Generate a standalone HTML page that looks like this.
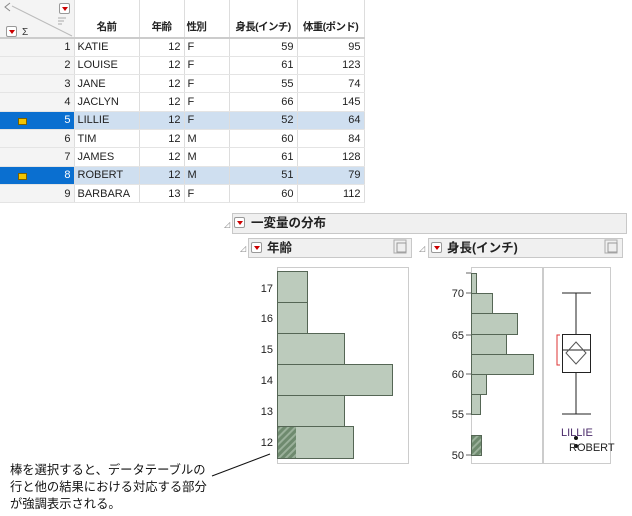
<!DOCTYPE html>
<html><head><meta charset="utf-8"><style>
*{margin:0;padding:0;box-sizing:border-box}
body{width:632px;height:516px;background:#fff;position:relative;overflow:hidden;font-family:"Liberation Sans","Noto Sans CJK JP",sans-serif;font-size:11px;color:#222}
.a{position:absolute}
table{position:absolute;left:0;top:0;border-collapse:collapse;table-layout:fixed;width:364px}
td{height:18.3px;border-right:1px solid #ddd;border-bottom:1px solid #e4e4e4;padding:0 3px;white-space:nowrap;overflow:hidden}
.rh{background:#f4f4f4;text-align:right}
.r{text-align:right}
.sel td{background:#cfdff0}
.sel td.rh{background:#0a6fd0;color:#fff}
th{height:38px;font-weight:bold;vertical-align:bottom;padding:0 2px 3px;border-right:1px solid #ddd;border-bottom:2px solid #ccc;font-size:10.5px;white-space:nowrap;letter-spacing:-0.6px;overflow:visible}
.hdr{background:#f0f0f0;border:1px solid #c8c8c8;font-weight:bold;font-size:12.5px;padding-left:18px;line-height:19px}
.tri{position:absolute;width:11px;height:11px;border:1px solid #999;background:#fff;border-radius:2px}
.tri:after{content:"";position:absolute;left:2px;top:3px;border-left:3px solid transparent;border-right:3px solid transparent;border-top:4px solid #c00}
</style></head><body>
<table>
<colgroup><col style="width:74px"><col style="width:65px"><col style="width:45px"><col style="width:45px"><col style="width:68px"><col style="width:67px"></colgroup>
<tr><th class="rh" style="background:#f4f4f4"></th><th>名前</th><th>年齢</th><th style="text-align:left">性別</th><th>身長(インチ)</th><th>体重(ポンド)</th></tr>
<tr><td class="rh">1</td><td>KATIE</td><td class="r">12</td><td>F</td><td class="r">59</td><td class="r">95</td></tr>
<tr><td class="rh">2</td><td>LOUISE</td><td class="r">12</td><td>F</td><td class="r">61</td><td class="r">123</td></tr>
<tr><td class="rh">3</td><td>JANE</td><td class="r">12</td><td>F</td><td class="r">55</td><td class="r">74</td></tr>
<tr><td class="rh">4</td><td>JACLYN</td><td class="r">12</td><td>F</td><td class="r">66</td><td class="r">145</td></tr>
<tr class="sel"><td class="rh"><span style="float:left;margin-left:15px;margin-top:4px;width:9px;height:7px;background:#f3c400;border:1px solid #7a6000"></span>5</td><td>LILLIE</td><td class="r">12</td><td>F</td><td class="r">52</td><td class="r">64</td></tr>
<tr><td class="rh">6</td><td>TIM</td><td class="r">12</td><td>M</td><td class="r">60</td><td class="r">84</td></tr>
<tr><td class="rh">7</td><td>JAMES</td><td class="r">12</td><td>M</td><td class="r">61</td><td class="r">128</td></tr>
<tr class="sel"><td class="rh"><span style="float:left;margin-left:15px;margin-top:4px;width:9px;height:7px;background:#f3c400;border:1px solid #7a6000"></span>8</td><td>ROBERT</td><td class="r">12</td><td>M</td><td class="r">51</td><td class="r">79</td></tr>
<tr><td class="rh">9</td><td>BARBARA</td><td class="r">13</td><td>F</td><td class="r">60</td><td class="r">112</td></tr>
</table>
<svg class="a" style="left:0;top:0" width="75" height="38"><line x1="12" y1="6" x2="72" y2="36" stroke="#bbb"/><path d="M10 3 L5 7 L10 11" fill="none" stroke="#888"/><line x1="58" y1="18" x2="66" y2="18" stroke="#aaa"/><line x1="58" y1="21" x2="64" y2="21" stroke="#aaa"/><line x1="58" y1="24" x2="62" y2="24" stroke="#aaa"/><text x="22" y="35" font-size="10" fill="#333">Σ</text></svg>
<div class="tri" style="left:59px;top:3px"></div>
<div class="tri" style="left:6px;top:26px"></div>

<div class="a hdr" style="left:232px;top:213px;width:395px;height:21px">一変量の分布</div>
<div class="tri" style="left:234px;top:217px"></div>
<div class="a" style="left:224px;top:220px;font-size:8px;color:#888">◿</div>
<div class="a hdr" style="left:248px;top:238px;width:164px;height:20px">年齢</div>
<div class="tri" style="left:251px;top:242px"></div>
<div class="a" style="left:240px;top:244px;font-size:8px;color:#888">◿</div>
<div class="a hdr" style="left:428px;top:238px;width:195px;height:20px">身長(インチ)</div>
<div class="tri" style="left:431px;top:242px"></div>
<div class="a" style="left:419px;top:244px;font-size:8px;color:#888">◿</div>

<svg class="a" style="left:0;top:0" width="632" height="516">
<defs><pattern id="h" width="5" height="5" patternUnits="userSpaceOnUse" patternTransform="rotate(45)"><rect width="5" height="5" fill="#6e8a6e"/><rect width="2" height="5" fill="#9ab09a"/></pattern></defs>
<rect x="394" y="240" width="12" height="13" fill="none" stroke="#aaa"/><rect x="397" y="243" width="9" height="9" fill="#eee" stroke="#999"/>
<rect x="605" y="240" width="12" height="13" fill="none" stroke="#aaa"/><rect x="608" y="243" width="9" height="9" fill="#eee" stroke="#999"/>
<rect x="277.5" y="267.5" width="131" height="196" fill="#fff" stroke="#ccc"/>
<g fill="#bccbbc" stroke="#556655">
<rect x="277.5" y="271.5" width="30" height="31"/><rect x="277.5" y="302.5" width="30" height="31"/><rect x="277.5" y="333.5" width="67" height="31"/><rect x="277.5" y="364.5" width="115" height="31"/><rect x="277.5" y="395.5" width="67" height="31"/><rect x="277.5" y="426.5" width="76" height="32"/></g>
<rect x="278" y="427" width="18" height="31" fill="url(#h)"/>
<g font-size="11" fill="#222" text-anchor="end"><text x="273" y="292">17</text><text x="273" y="322">16</text><text x="273" y="353">15</text><text x="273" y="384">14</text><text x="273" y="415">13</text><text x="273" y="446">12</text></g>
<rect x="471.5" y="267.5" width="139" height="196" fill="#fff" stroke="#ccc"/>
<line x1="543" y1="268" x2="543" y2="463" stroke="#ccc" stroke-width="2"/>
<g fill="#bccbbc" stroke="#556655">
<rect x="471.5" y="273.5" width="5" height="20"/><rect x="471.5" y="293.5" width="21" height="20"/><rect x="471.5" y="313.5" width="46" height="21"/><rect x="471.5" y="334.5" width="35" height="20"/><rect x="471.5" y="354.5" width="62" height="20"/><rect x="471.5" y="374.5" width="15" height="20"/><rect x="471.5" y="394.5" width="9" height="20"/></g>
<rect x="471.5" y="435.5" width="10" height="20" fill="url(#h)" stroke="#556655"/>
<g stroke="#666"><line x1="466" y1="273" x2="471" y2="273"/><line x1="466" y1="293" x2="471" y2="293"/><line x1="466" y1="335" x2="471" y2="335"/><line x1="466" y1="374" x2="471" y2="374"/><line x1="466" y1="414" x2="471" y2="414"/><line x1="466" y1="455" x2="471" y2="455"/></g>
<g font-size="11" fill="#222" text-anchor="end"><text x="464" y="297">70</text><text x="464" y="339">65</text><text x="464" y="378">60</text><text x="464" y="418">55</text><text x="464" y="459">50</text></g>
<g stroke="#222" fill="none"><line x1="576" y1="293" x2="576" y2="335"/><line x1="576" y1="372" x2="576" y2="414"/><line x1="562" y1="293" x2="591" y2="293"/><line x1="562" y1="414" x2="591" y2="414"/><rect x="562.5" y="334.5" width="28" height="38"/><line x1="562" y1="350" x2="590" y2="350"/><path d="M576 342 L586 353 L576 364 L566 353 Z" stroke="#555"/></g>
<path d="M560 335 H557 V365 H560" stroke="#d33" fill="none"/>
<circle cx="576" cy="438" r="2" fill="#111"/><circle cx="576" cy="446" r="2" fill="#111"/>
<text x="561" y="436" font-size="11" fill="#4a2a6a">LILLIE</text><text x="569" y="451" font-size="11" fill="#222">ROBERT</text>
<line x1="212" y1="476" x2="270" y2="454" stroke="#111"/>
</svg>
<div class="a" style="left:10px;top:462px;font-size:12.3px;line-height:17px;color:#111">棒を選択すると、データテーブルの<br>行と他の結果における対応する部分<br>が強調表示される。</div>
</body></html>
